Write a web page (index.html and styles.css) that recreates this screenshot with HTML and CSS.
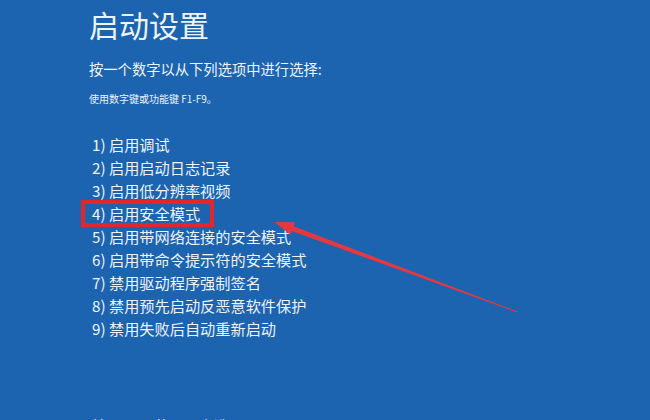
FILE: index.html
```html
<!DOCTYPE html>
<html lang="zh-CN">
<head>
<meta charset="utf-8">
<title>启动设置</title>
<link rel="stylesheet" href="styles.css">
</head>
<body>
<div class="screen">
  <h1 class="title">启动设置</h1>
  <p class="prompt">按一个数字以从下列选项中进行选择:</p>
  <p class="hint">使用数字键或功能键 F1-F9。</p>
  <ol class="options">
    <li>1) 启用调试</li>
    <li>2) 启用启动日志记录</li>
    <li>3) 启用低分辨率视频</li>
    <li class="marked">4) 启用安全模式</li>
    <li>5) 启用带网络连接的安全模式</li>
    <li>6) 启用带命令提示符的安全模式</li>
    <li>7) 禁用驱动程序强制签名</li>
    <li>8) 禁用预先启动反恶意软件保护</li>
    <li>9) 禁用失败后自动重新启动</li>
  </ol>
  <p class="more">按 F10 以获取更多选项</p>
  <svg class="arrow" width="650" height="420" viewBox="0 0 650 420">
    <polygon points="292.8,225.9 291,230.7 517.2,312.4 517.6,311.6" fill="#e8383f"/>
    <polygon points="274.5,222 295,222.2 290.5,235" fill="#e8383f"/>
  </svg>
</div>
</body>
</html>
```
FILE: styles.css
```css
html, body {
  margin: 0;
  padding: 0;
}
body {
  width: 650px;
  height: 420px;
  overflow: hidden;
  background: #1c64af;
  color: #eef3fa;
  font-family: "Noto Sans CJK SC", "Noto Sans", sans-serif;
}
.screen {
  position: relative;
  width: 650px;
  height: 420px;
  box-sizing: border-box;
  padding: 4px 0 0 89px;
}
.title {
  margin: 0;
  font-size: 30px;
  font-weight: 400;
  line-height: 40px;
  letter-spacing: 0;
}
.prompt {
  margin: 15px 0 0;
  font-size: 14.3px;
  line-height: 20px;
}
.hint {
  margin: 12.5px 0 0;
  font-size: 10px;
  line-height: 14px;
}
.options {
  list-style: none;
  margin: 27.5px 0 0;
  padding: 0 0 0 3px;
  font-size: 15.2px;
  line-height: 23px;
}
.options li {
  white-space: nowrap;
}
.marked {
  position: relative;
}
.marked::before {
  content: "";
  position: absolute;
  left: -11px;
  top: -2px;
  width: 125px;
  height: 19px;
  border: 4px solid #e3262c;
}
.more {
  margin: 74px 0 0;
  padding-left: 3px;
  font-size: 15px;
  line-height: 23px;
}
.arrow {
  position: absolute;
  left: 0;
  top: 0;
}
```
